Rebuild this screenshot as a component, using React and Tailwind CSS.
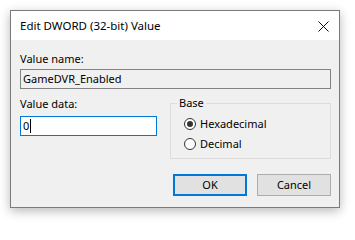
const Radio = ({ checked, label }) => (
  <label className="flex h-[20px] items-center gap-[4px]">
    <span className="flex h-[12px] w-[12px] items-center justify-center rounded-full border border-[#333333] bg-white">
      {checked && <span className="h-[6px] w-[6px] rounded-full bg-[#333333]" />}
    </span>
    <span>{label}</span>
  </label>
)

const App = () => {
  return (
    <div className="h-[227px] w-[355px] bg-white pl-[10px] pt-[10px] text-[11px] leading-[16px] text-black" style={{ fontFamily: '"Noto Sans", "Liberation Sans", sans-serif' }}>
      <div className="flex h-[198px] w-[330px] flex-col border border-[#7a7a7a] shadow-[0_3px_10px_rgba(0,0,0,0.28)]">
        <div className="flex h-[29px] items-center justify-between bg-white pl-[9px] pr-[10px]">
          <span className="text-[11.5px]">Edit DWORD (32-bit) Value</span>
          <svg width="11" height="11" viewBox="0 0 11 11" className="mt-[1px]">
            <path d="M0.5 0.5 L10.5 10.5 M10.5 0.5 L0.5 10.5" stroke="#111" strokeWidth="1" />
          </svg>
        </div>

        <div className="flex flex-1 flex-col bg-[#f0f0f0] pl-[9px] pr-[8px] pt-[11px]">
          <div>Value name:</div>
          <div className="mt-[2px] flex h-[20px] items-center border border-[#838383] bg-[#f0f0f0] pl-[2px]">
            GameDVR_Enabled
          </div>

          <div className="mt-[7px] flex">
            <div className="w-[137px]">
              <div>Value data:</div>
              <div className="mt-[4px] flex h-[20px] items-center border border-[#0078d7] bg-white pl-[2px]">
                <span>0</span>
                <span className="ml-[1px] h-[14px] w-[1px] bg-black" />
              </div>
            </div>

            <div className="relative ml-[13px] mt-[7px] h-[56px] flex-1 border border-[#dcdcdc] pl-[13px] pt-[10px]">
              <span className="absolute left-[6px] top-[-9px] bg-[#f0f0f0] px-[2px]">Base</span>
              <Radio checked label="Hexadecimal" />
              <Radio label="Decimal" />
            </div>
          </div>

          <div className="mt-[15px] flex justify-end gap-[10px]">
            <button className="flex h-[22px] w-[74px] items-center justify-center border-2 border-[#0078d7] bg-[#e1e1e1]">
              OK
            </button>
            <button className="flex h-[22px] w-[74px] items-center justify-center border border-[#adadad] bg-[#e1e1e1]">
              Cancel
            </button>
          </div>
        </div>
      </div>
    </div>
  )
}

export default App
